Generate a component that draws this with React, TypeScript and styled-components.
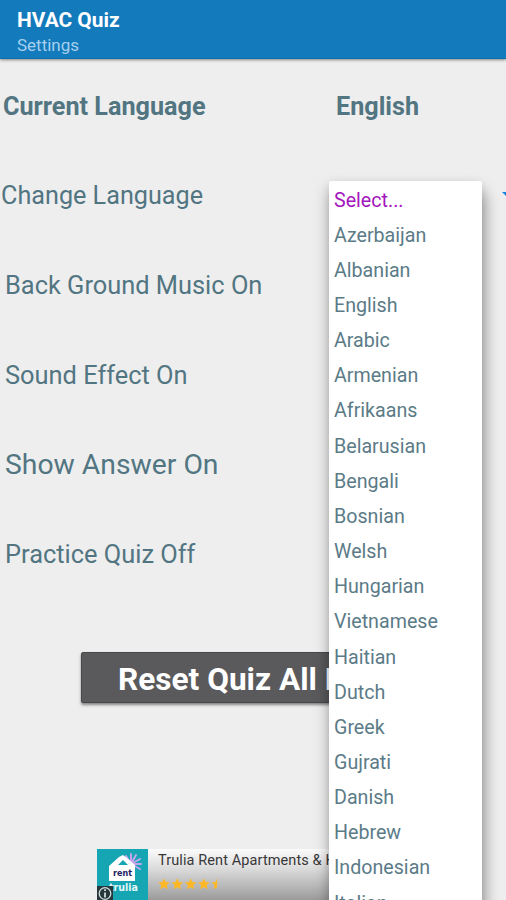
import React from "react";
import styled, { createGlobalStyle } from "styled-components";

const GlobalStyle = createGlobalStyle`
  * { box-sizing: border-box; }
  html, body { margin: 0; padding: 0; overflow: hidden; }
  body { font-family: Roboto, "Liberation Sans", sans-serif; background: #eeeeee; }
`;

const Screen = styled.div`
  position: relative;
  display: flex;
  flex-direction: column;
  width: 506px;
  height: 900px;
  overflow: hidden;
  background: #eeeeee;
  color: #527582;
`;

const AppBar = styled.header`
  flex: none;
  height: 59px;
  padding: 8px 17px 0;
  background: #137abc;
  border-bottom: 1px solid #0e6fb0;
  box-shadow: 0 1px 3px rgba(0, 0, 0, 0.45);
  white-space: nowrap;
`;

const Title = styled.h1`
  margin: 0;
  font-size: 20.9px;
  line-height: 24px;
  font-weight: 700;
  color: #ffffff;
`;

const Subtitle = styled.div`
  margin-top: 3px;
  font-size: 17px;
  line-height: 20px;
  color: #a5d0ee;
`;

const SettingsList = styled.main`
  flex: none;
  display: grid;
  grid-template-rows: repeat(6, 89.6px);
  padding-top: 2px;
`;

const SettingRow = styled.div<{ $indent: number }>`
  display: grid;
  grid-template-columns: ${(p) => 336 - p.$indent}px 1fr;
  align-items: center;
  padding-left: ${(p) => p.$indent}px;
`;

const Label = styled.span<{ $size: number; $strong?: boolean; $drop?: number }>`
  padding-top: ${(p) => p.$drop ?? 0}px;
  font-size: ${(p) => p.$size}px;
  line-height: 32px;
  font-weight: ${(p) => (p.$strong ? 700 : 400)};
  white-space: nowrap;
`;

const SpinnerArrow = styled.svg`
  justify-self: end;
  width: 4px;
  height: 10px;
`;

const ResetButton = styled.button`
  flex: none;
  width: 344px;
  height: 51px;
  margin: 53.4px 0 0 81px;
  padding: 5px 0 0 36px;
  border: 1px solid #49494b;
  border-radius: 2px;
  background: #5a5a5c;
  box-shadow: 0 2px 3px rgba(0, 0, 0, 0.45);
  color: #ffffff;
  font: 700 31.6px/44px Roboto, "Liberation Sans", sans-serif;
  text-align: left;
  white-space: nowrap;
`;

const AdBanner = styled.aside`
  flex: none;
  display: flex;
  width: 312px;
  height: 51px;
  margin: auto 0 0 97px;
  background: linear-gradient(#fbfbfb 0%, #dadada 40%, #9b9b9b 100%);
`;

const AdLogo = styled.svg`
  flex: none;
  width: 51px;
  height: 51px;
`;

const AdCopy = styled.div`
  display: flex;
  flex-direction: column;
  padding: 3px 0 0 10px;
`;

const AdTitle = styled.span`
  font-size: 14.5px;
  line-height: 18px;
  letter-spacing: 0.1px;
  color: #383838;
  white-space: nowrap;
`;

const Stars = styled.svg`
  width: 66px;
  height: 12px;
  margin-top: 8px;
`;

const Menu = styled.ul`
  position: absolute;
  top: 181px;
  left: 329px;
  width: 153px;
  height: 760px;
  margin: 0;
  padding: 1.5px 5px 0;
  list-style: none;
  background: #ffffff;
  border-radius: 2px;
  box-shadow: 0 8px 16px rgba(0, 0, 0, 0.26), 0 2px 10px rgba(0, 0, 0, 0.08), 5px 14px 14px rgba(0, 0, 0, 0.16);
`;

const MenuItem = styled.li<{ $selected: boolean }>`
  height: 35.16px;
  font-size: 19.65px;
  line-height: 35.16px;
  color: ${(p) => (p.$selected ? "#a416bd" : "#5b7b87")};
`;

const settings = [
  { label: "Back Ground Music On", size: 25.4, drop: 0 },
  { label: "Sound Effect On", size: 25.4, drop: 0 },
  { label: "Show Answer On", size: 28.3, drop: 2 },
  { label: "Practice Quiz Off", size: 25.4, drop: 0 },
];

const languages = [
  "Select...", "Azerbaijan", "Albanian", "English", "Arabic", "Armenian", "Afrikaans",
  "Belarusian", "Bengali", "Bosnian", "Welsh", "Hungarian", "Vietnamese", "Haitian",
  "Dutch", "Greek", "Gujrati", "Danish", "Hebrew", "Indonesian", "Italian",
];

const starPath = "M6 0.3 7.7 3.9 11.8 4.4 8.8 7.1 9.6 11.3 6 9.2 2.4 11.3 3.2 7.1 0.2 4.4 4.3 3.9Z";
const halfStarPath = "M6 0.3 4.3 3.9 0.2 4.4 3.2 7.1 2.4 11.3 6 9.2Z";

const LogoWord = styled.text<{ $fill: string; $size: number }>`
  font-family: "DejaVu Sans", sans-serif;
  font-size: ${(p) => p.$size}px;
  font-weight: 700;
  fill: ${(p) => p.$fill};
`;

function TruliaLogo() {
  return (
    <AdLogo viewBox="0 0 51 51">
      <rect width="51" height="51" fill="#16a5b3" />
      <g stroke="#c5a5ee" strokeWidth="2" strokeLinecap="round">
        <path d="M34 15V5M34 15 29 7M34 15 39 6M34 15 43 10M34 15H44M34 15 43 20" />
      </g>
      <path d="M12 17 22 8 26 6 30 9 38 16V32H12Z" fill="#ffffff" />
      <path d="M21 16 26 11 31 16Z" fill="#16a5b3" />
      <LogoWord x="16" y="27" $size={8} $fill="#1b2262" textLength="19" lengthAdjust="spacingAndGlyphs">rent</LogoWord>
      <LogoWord x="12" y="42" $size={10} $fill="#e1f7fa" textLength="29" lengthAdjust="spacingAndGlyphs">trulia</LogoWord>
      <rect y="37" width="16" height="14" fill="#26383b" />
      <circle cx="8" cy="44.5" r="5.8" fill="#26383b" stroke="#d1dddd" strokeWidth="1.3" />
      <path d="M8 43.5v5M8 40.3v1.6" stroke="#d1dddd" strokeWidth="1.8" />
    </AdLogo>
  );
}

export default function App() {
  return (
    <>
      <GlobalStyle />
      <Screen>
        <AppBar>
          <Title>HVAC Quiz</Title>
          <Subtitle>Settings</Subtitle>
        </AppBar>
        <SettingsList>
          <SettingRow $indent={3}>
            <Label $size={25.2} $strong $drop={2}>Current Language</Label>
            <Label $size={25.2} $strong $drop={2}>English</Label>
          </SettingRow>
          <SettingRow $indent={1}>
            <Label $size={25.2} $drop={2}>Change Language</Label>
            <SpinnerArrow viewBox="0 0 4 10">
              <path d="M0 2H10L5 7Z" fill="#1683df" />
            </SpinnerArrow>
          </SettingRow>
          {settings.map((s) => (
            <SettingRow key={s.label} $indent={5}>
              <Label $size={s.size} $drop={s.drop}>{s.label}</Label>
            </SettingRow>
          ))}
        </SettingsList>
        <ResetButton>Reset Quiz All Data</ResetButton>
        <AdBanner>
          <TruliaLogo />
          <AdCopy>
            <AdTitle>Trulia Rent Apartments &amp; Homes</AdTitle>
            <Stars viewBox="0 0 66 12" fill="#fdb827">
              {[0, 1, 2, 3].map((i) => (
                <path key={i} d={starPath} transform={`translate(${i * 13.3} 0)`} />
              ))}
              <path d={halfStarPath} transform="translate(53.2 0)" />
            </Stars>
          </AdCopy>
        </AdBanner>
        <Menu>
          {languages.map((name, i) => (
            <MenuItem key={name} $selected={i === 0}>{name}</MenuItem>
          ))}
        </Menu>
      </Screen>
    </>
  );
}
